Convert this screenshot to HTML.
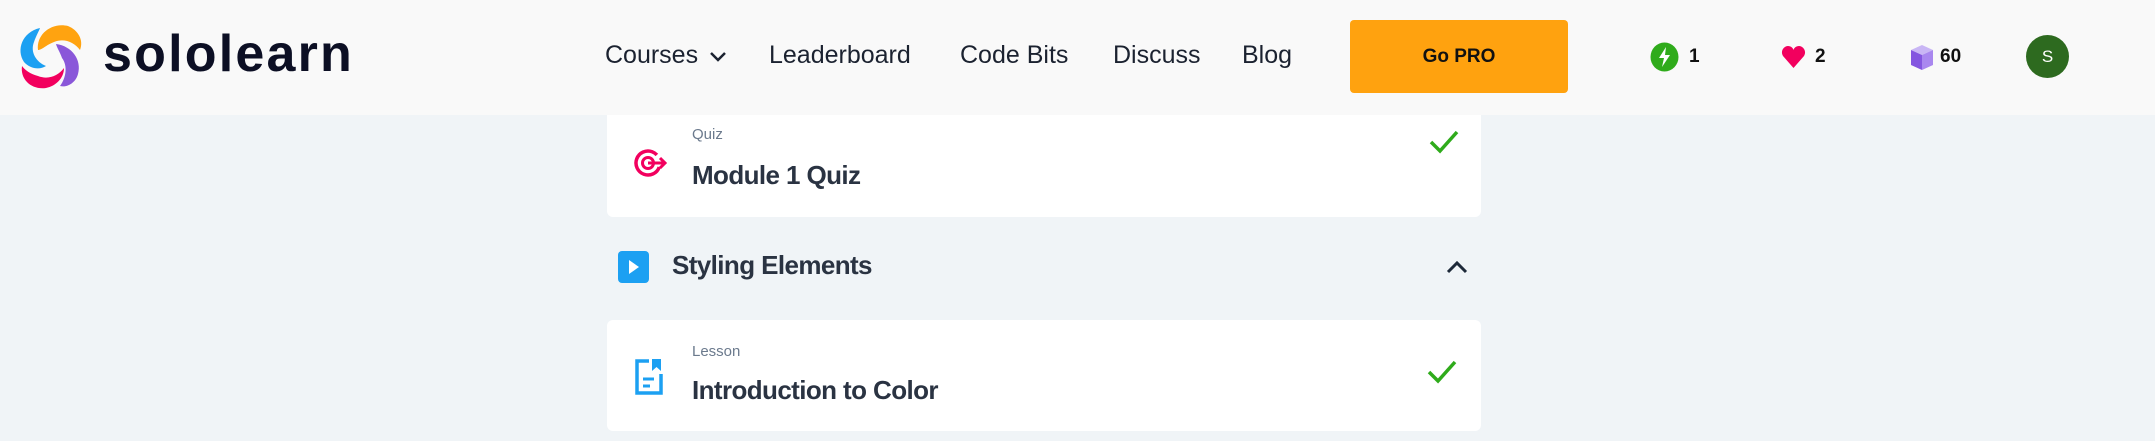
<!DOCTYPE html>
<html><head><meta charset="utf-8"><style>
*{margin:0;padding:0;box-sizing:border-box}
body{width:2155px;height:441px;background:#f0f4f7;font-family:"Liberation Sans",sans-serif;position:relative;overflow:hidden;color:#1d2939}
.hdr{position:absolute;left:0;top:0;width:2155px;height:115px;background:#f9f9f9;z-index:2}
.abs{position:absolute;white-space:nowrap}
.nav{font-size:25px;color:#1b2230;top:41px}
.card{position:absolute;left:607px;width:874px;background:#fff;border-radius:6px}
.lbl{font-size:15px;color:#6b7a8d}
.ttl{font-size:26px;font-weight:bold;color:#2a3342;letter-spacing:-0.6px}
.num{font-size:19px;font-weight:bold;color:#111;top:46px}
</style></head><body>
<div class="hdr">
<svg class="abs" style="left:0;top:0" width="100" height="115" viewBox="0 0 100 115">
<path d="M40 28 C22 32 16 50 24 62 C30 69 40 70 46 66 C36 62 30 52 34 42 C36 36 39 31 40 28Z" fill="#1ca0f2"/>
<path d="M38 50 C36 34 52 22 68 26 C78 30 84 40 80 50 C74 42 64 38 54 42 C46 45 42 50 38 50Z" fill="#ffa310"/>
<path d="M56 44 C72 46 82 60 78 74 C76 82 68 88 60 86 C66 78 68 66 62 58 C60 52 57 48 56 44Z" fill="#8a57d9"/>
<path d="M22 66 C20 80 32 90 46 88 C56 86 64 78 64 68 C58 76 48 80 38 76 C30 74 25 70 22 66Z" fill="#f2005e"/>
</svg>
<div class="abs" style="left:103px;top:24px;font-size:52px;font-weight:bold;color:#0c0f24;letter-spacing:2.2px">sololearn</div>
<div class="abs nav" style="left:605px">Courses <svg width="18" height="12" viewBox="0 0 18 12" style="margin-left:4px"><path d="M2 2 L9 9 L16 2" stroke="#1b2230" stroke-width="2.5" fill="none"/></svg></div>
<div class="abs nav" style="left:769px">Leaderboard</div>
<div class="abs nav" style="left:960px">Code Bits</div>
<div class="abs nav" style="left:1113px">Discuss</div>
<div class="abs nav" style="left:1242px">Blog</div>
<div class="abs" style="left:1350px;top:20px;width:218px;height:73px;background:#ffa20f;border-radius:4px;font-weight:bold;font-size:19px;color:#111;text-align:center;line-height:73px">Go PRO</div>
<svg class="abs" style="left:1650px;top:42px" width="29" height="30" viewBox="0 0 29 30"><ellipse cx="14.5" cy="15" rx="14" ry="14.5" fill="#2fab1b"/><path d="M16 5 L9 16 H14 L12 25 L20 13 H15 Z" fill="#fff"/></svg>
<div class="abs num" style="left:1689px">1</div>
<svg class="abs" style="left:1781px;top:46px" width="25" height="22" viewBox="0 0 25 22"><path d="M12.5 22 L2 10 C-1 5 3 0 7 0 C10 0 12 2 12.5 4 C13 2 15 0 18 0 C22 0 26 5 23 10 Z" fill="#f2005e"/></svg>
<div class="abs num" style="left:1815px">2</div>
<svg class="abs" style="left:1910px;top:45px" width="24" height="25" viewBox="0 0 24 25"><path d="M12 0 L23 5 L12 10 L1 5Z" fill="#c9b6f5"/><path d="M1 5 L12 10 V25 L1 20Z" fill="#8456e0"/><path d="M23 5 L12 10 V25 L23 20Z" fill="#a987ef"/></svg>
<div class="abs num" style="left:1940px">60</div>
<div class="abs" style="left:2026px;top:35px;width:43px;height:43px;border-radius:50%;background:#2d6a1f;color:#fff;font-size:17px;text-align:center;line-height:43px">S</div>
</div>

<div class="card" style="top:100px;height:117px">
<svg class="abs" style="left:26px;top:47px" width="34" height="32" viewBox="0 0 34 32"><circle cx="15" cy="16" r="12" fill="none" stroke="#f2005e" stroke-width="3.5" stroke-dasharray="62 14" transform="rotate(20 15 16)"/><circle cx="15" cy="16" r="5.5" fill="none" stroke="#f2005e" stroke-width="3"/><path d="M15 16 H32 M27 11 L32 16 L27 21" stroke="#f2005e" stroke-width="3" fill="none"/></svg>
<div class="abs lbl" style="left:85px;top:26px">Quiz</div>
<div class="abs ttl" style="left:85px;top:60px">Module 1 Quiz</div>
<svg class="abs" style="left:822px;top:30px" width="30" height="24" viewBox="0 0 30 24"><path d="M2 12 L11 21 L28 2" stroke="#2fab1b" stroke-width="3.5" fill="none"/></svg>
</div>

<div class="abs" style="left:618px;top:251px;width:31px;height:32px;background:#1ca0f2;border-radius:4px"><svg width="31" height="32" viewBox="0 0 31 32"><path d="M11 9 L21 16 L11 23Z" fill="#fff"/></svg></div>
<div class="abs ttl" style="left:672px;top:250px">Styling Elements</div>
<svg class="abs" style="left:1445px;top:259px" width="24" height="16" viewBox="0 0 24 16"><path d="M3 13 L12 4 L21 13" stroke="#1d2939" stroke-width="3" fill="none"/></svg>

<div class="card" style="top:320px;height:111px">
<svg class="abs" style="left:27px;top:38px" width="30" height="38" viewBox="0 0 30 38"><path d="M15 3 H3 V35 H27 V16" stroke="#1ca0f2" stroke-width="3.5" fill="none"/><path d="M18 1 H27 V13 L22.5 9 L18 13Z" fill="#1ca0f2"/><path d="M9 21 H20 M9 28 H16" stroke="#1ca0f2" stroke-width="3"/></svg>
<div class="abs lbl" style="left:85px;top:23px">Lesson</div>
<div class="abs ttl" style="left:85px;top:55px">Introduction to Color</div>
<svg class="abs" style="left:820px;top:40px" width="30" height="24" viewBox="0 0 30 24"><path d="M2 12 L11 21 L28 2" stroke="#2fab1b" stroke-width="3.5" fill="none"/></svg>
</div>
</body></html>
